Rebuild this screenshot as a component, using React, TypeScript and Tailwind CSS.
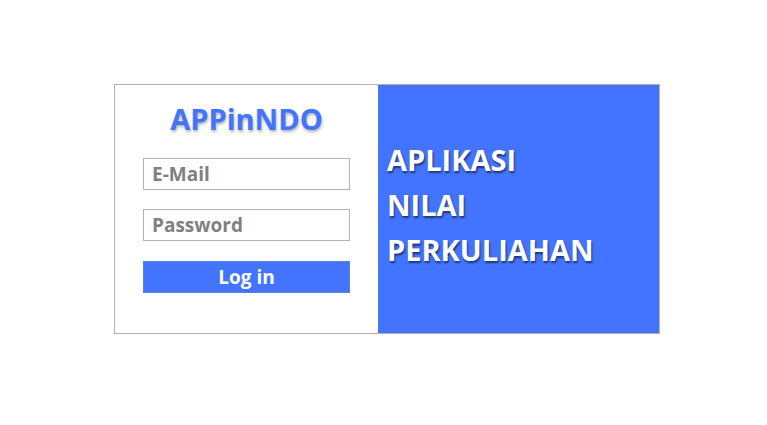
import React from "react";

export default function App() {
  const font = { fontFamily: '"Open Sans", "Noto Sans", sans-serif' };
  return (
    <div className="w-[767px] h-[425px] bg-white" style={font}>
      <div className="pt-[84px] pl-[114px]">
        <div className="flex w-[546px] h-[250px] border border-[#b3b3b3]">
          <div className="w-[263px] flex flex-col px-[28px] pt-[14px]">
            <div className="text-center text-[29px] font-bold leading-[40px] text-[#4374ff] [text-shadow:1px_2px_3px_rgba(0,0,0,0.3)]">
              APPinNDO
            </div>
            <div className="mt-[19px] h-[32px] border border-[#b3b3b3] flex items-center pl-[8px] text-[19px] font-bold text-[#808080]">
              E-Mail
            </div>
            <div className="mt-[19px] h-[32px] border border-[#b3b3b3] flex items-center pl-[8px] text-[19px] font-bold text-[#808080]">
              Password
            </div>
            <div className="mt-[20px] h-[32px] bg-[#4374ff] border border-[#5a7fe0] flex items-center justify-center text-[19px] font-bold text-white">
              Log in
            </div>
          </div>
          <div className="flex-1 bg-[#4374ff] flex flex-col justify-center pl-[9px] pb-[10px]">
            <div className="text-[29px] font-bold leading-[45px] text-white [text-shadow:1px_2px_2px_rgba(0,0,0,0.55)]">
              APLIKASI
            </div>
            <div className="text-[29px] font-bold leading-[45px] text-white [text-shadow:1px_2px_2px_rgba(0,0,0,0.55)]">
              NILAI
            </div>
            <div className="text-[29px] font-bold leading-[45px] text-white [text-shadow:1px_2px_2px_rgba(0,0,0,0.55)]">
              PERKULIAHAN
            </div>
          </div>
        </div>
      </div>
    </div>
  );
}
